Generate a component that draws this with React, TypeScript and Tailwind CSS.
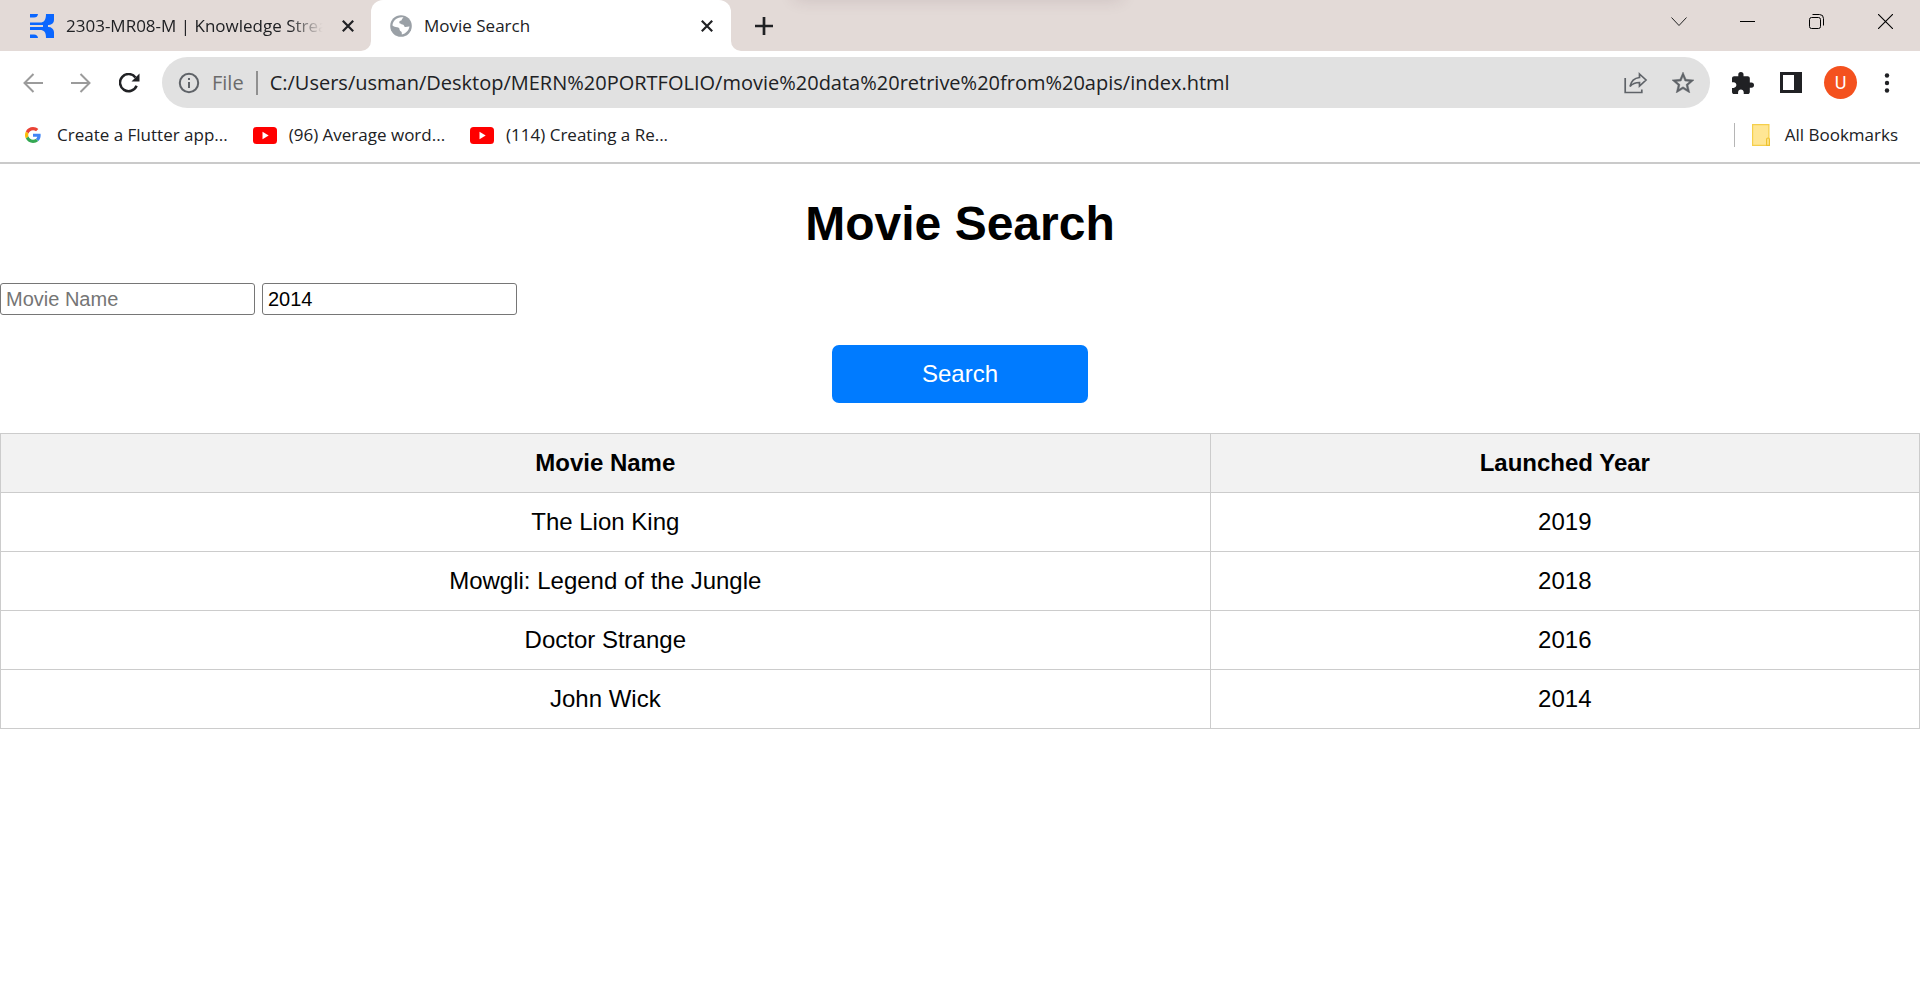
import React, { useState } from 'react';

const iconButton = 'flex h-[30px] w-[30px] shrink-0 items-center justify-center';
const uiFont = "font-['Open_Sans','Noto_Sans',sans-serif]";

function BrandIcon() {
  return (
    <svg width="24" height="24" viewBox="0 0 24 24" className="shrink-0" fill="#0a66ff" aria-hidden="true">
      <path d="M0 0h8a4 4 0 0 1-4 3.500H0z" />
      <path d="M16 0h8v6a5 5 0 0 1-5 5H0V8.500h10c4 0 6-2.500 6-8.500z" />
      <path d="M0 13h18.500a5.500 5.500 0 0 1 5.500 5V24h-8c0-6-2-8-6-8H0z" />
      <path d="M13 10.500h5v3h-5z" />
      <path d="M0 20.500h4A4 4 0 0 1 8 24H0z" />
    </svg>
  );
}

function GlobeIcon() {
  return (
    <svg width="22" height="22" viewBox="0 0 22 22" className="shrink-0" aria-hidden="true">
      <circle cx="11" cy="11" r="10.800" fill="#9aa0a6" />
      <path
        fill="#fff"
        d="M13.500 2.400c-.8.800-1.800 1.700-1.700 2.400.1.900-1.200.9-1.900 1.200-.9.400-.6 1.600-.3 2.200.3.500 1 .2 1.400.6.500.6 1.500.8 2.300 1 .9.300.7 1.900 1.600 2.200 1.400.4 2.900-.6 4.600-.4-.6 3.700-3.600 7.200-7.700 7.900v-1.700c0-1.100-1-1.600-1.700-2.100-.8-.6-.4-1.800-.9-2.400-1-1.200-3.200-1-4.500-1.500-.8-.3-1.500-1-2.200-1.300C2.600 6 7.400 1.300 13.500 2.400z"
      />
    </svg>
  );
}

function CloseIcon() {
  return (
    <svg width="12" height="12" viewBox="0 0 12 12" fill="none" stroke="#202124" strokeWidth="2.200" aria-hidden="true">
      <path d="M.8.8l10.400 10.400M11.200.8L.8 11.200" />
    </svg>
  );
}

function GoogleIcon() {
  return (
    <svg width="16" height="16" viewBox="0 0 48 48" className="shrink-0" aria-hidden="true">
      <path fill="#EA4335" d="M24 9.500c3.540 0 6.710 1.220 9.210 3.600l6.850-6.850C35.900 2.380 30.470 0 24 0 14.620 0 6.510 5.380 2.560 13.220l7.980 6.190C12.430 13.720 17.740 9.500 24 9.500z" />
      <path fill="#4285F4" d="M46.980 24.550c0-1.570-.15-3.090-.38-4.550H24v9.020h12.940c-.58 2.960-2.260 5.480-4.780 7.180l7.730 6c4.510-4.180 7.090-10.360 7.090-17.650z" />
      <path fill="#FBBC05" d="M10.530 28.590c-.48-1.450-.76-2.990-.76-4.590s.27-3.140.76-4.590l-7.980-6.190C.92 16.460 0 20.120 0 24c0 3.880.92 7.540 2.560 10.780l7.970-6.190z" />
      <path fill="#34A853" d="M24 48c6.480 0 11.930-2.130 15.890-5.810l-7.730-6c-2.150 1.450-4.920 2.300-8.160 2.300-6.260 0-11.570-4.220-13.470-9.910l-7.980 6.190C6.510 42.620 14.620 48 24 48z" />
    </svg>
  );
}

function VideoIcon() {
  return (
    <svg width="24" height="17" viewBox="0 0 24 17" className="shrink-0" aria-hidden="true">
      <rect width="24" height="17" rx="3.500" fill="#f00" />
      <path d="M9.500 4.800v7.400l6.200-3.700z" fill="#fff" />
    </svg>
  );
}

function TabStrip() {
  return (
    <div className="flex h-[51px] bg-white text-[17px]">
      <div className="flex w-[371px] shrink-0 items-center rounded-br-[10px] bg-[#e3dad7] pl-[30px] pr-[15px]">
        <BrandIcon />
        <span className="ml-3 whitespace-nowrap [mask-image:linear-gradient(to_right,black_85%,transparent_98%)]">
          2303-MR08-M | Knowledge Strea
        </span>
        <button aria-label="Close tab" className="ml-auto flex h-4 w-4 shrink-0 items-center justify-center">
          <CloseIcon />
        </button>
      </div>
      <div className="w-[360px] shrink-0 bg-[#e3dad7]">
        <div className="flex h-full items-center rounded-t-[12px] bg-white pl-[19px] pr-4">
          <GlobeIcon />
          <span className="ml-3">Movie Search</span>
          <button aria-label="Close tab" className="ml-auto flex h-4 w-4 items-center justify-center">
            <CloseIcon />
          </button>
        </div>
      </div>
      <div className="relative flex flex-1 justify-between overflow-hidden rounded-bl-[10px] bg-[#e3dad7]">
        <div className="absolute -top-4 left-[62px] h-4 w-[330px] rounded-lg shadow-[0_0_16px_rgba(80,50,60,0.15)]" />
        <button aria-label="New tab" className="ml-[18px] flex w-[30px] items-center justify-center">
          <svg width="18" height="18" viewBox="0 0 18 18" fill="none" stroke="#202124" strokeWidth="2.700" aria-hidden="true">
            <path d="M9 0v18M0 9h18" />
          </svg>
        </button>
        <div className="flex h-[43px]">
          <button aria-label="Search tabs" className="flex w-[69px] items-center justify-center">
            <svg width="16" height="16" viewBox="0 0 16 16" fill="none" stroke="#222" strokeWidth="1" aria-hidden="true">
              <path d="M.5 3.500l7.500 8 7.500-8" />
            </svg>
          </button>
          <button aria-label="Minimize" className="flex w-[69px] items-center justify-center">
            <svg width="15" height="15" viewBox="0 0 15 15" fill="#000" aria-hidden="true">
              <path d="M0 7h15v1H0z" />
            </svg>
          </button>
          <button aria-label="Restore" className="flex w-[69px] items-center justify-center">
            <svg width="15" height="15" viewBox="0 0 15 15" fill="none" stroke="#000" strokeWidth="1" aria-hidden="true">
              <rect x=".5" y="3.500" width="11" height="11" rx="2" />
              <path d="M3.500.5h7a4 4 0 0 1 4 4v7" />
            </svg>
          </button>
          <button aria-label="Close window" className="flex w-[69px] items-center justify-center">
            <svg width="15" height="15" viewBox="0 0 15 15" fill="none" stroke="#000" strokeWidth="1.100" aria-hidden="true">
              <path d="M0 0l15 15M15 0L0 15" />
            </svg>
          </button>
        </div>
      </div>
    </div>
  );
}

function Toolbar() {
  return (
    <div className="flex items-center gap-[18px] bg-white pl-[18px] pr-[21px] pt-1.5">
      <button aria-label="Back" className={iconButton}>
        <svg width="20" height="20" viewBox="0 0 20 20" fill="none" stroke="#9b9b9b" strokeWidth="2" aria-hidden="true">
          <path d="M20 10H2M10.500 1L1.500 10l9 9" />
        </svg>
      </button>
      <button aria-label="Forward" className={iconButton}>
        <svg width="20" height="20" viewBox="0 0 20 20" fill="none" stroke="#9b9b9b" strokeWidth="2" aria-hidden="true">
          <path d="M0 10h18M9.500 1l9 9-9 9" />
        </svg>
      </button>
      <button aria-label="Reload" className={iconButton}>
        <svg width="21" height="20" viewBox="0 0 21 20" fill="none" aria-hidden="true">
          <path d="M17.600 12.800A8.600 8.600 0 1 1 16.500 4.500" stroke="#202124" strokeWidth="2.500" />
          <path d="M20.500.5v8h-8z" fill="#202124" />
        </svg>
      </button>
      <div className="flex h-[51px] flex-1 items-center rounded-full bg-[#e1e1e1] pl-4 pr-4">
        <svg width="22" height="22" viewBox="0 0 22 22" fill="none" className="shrink-0" aria-hidden="true">
          <circle cx="11" cy="11" r="9.200" stroke="#5f6368" strokeWidth="2" />
          <path d="M10 10h2v6h-2zM10 6h2v2h-2z" fill="#5f6368" />
        </svg>
        <span className="ml-3 text-[20px] text-[#6b6b6b]">File</span>
        <span className="ml-3 h-6 w-0.5 bg-[#909090]" />
        <input
          aria-label="Address"
          className="ml-3 min-w-0 flex-1 bg-transparent text-[20px] text-[#202124] outline-none"
          defaultValue="C:/Users/usman/Desktop/MERN%20PORTFOLIO/movie%20data%20retrive%20from%20apis/index.html"
        />
        <button aria-label="Share" className="mr-6">
          <svg width="24" height="22" viewBox="0 0 24 22" fill="none" stroke="#5f6368" strokeWidth="1.700" aria-hidden="true">
            <path d="M1.200 6v14.500h16.600v-3" />
            <path d="M15.500 2l6.500 6-6.500 6v-3.500c-4 0-7 1-9.500 4C7 9.500 10 6 15.500 5.500z" />
          </svg>
        </button>
        <button aria-label="Bookmark this page">
          <svg width="22" height="21" viewBox="2 2 20 19" fill="#5f6368" stroke="#5f6368" strokeWidth=".4" aria-hidden="true">
            <path d="M22 9.240l-7.190-.62L12 2 9.190 8.630 2 9.240l5.460 4.730L5.820 21 12 17.270 18.180 21l-1.630-7.030L22 9.240zM12 15.400l-3.760 2.270 1-4.280-3.320-2.880 4.380-.38L12 6.100l1.710 4.040 4.380.38-3.320 2.880 1 4.280L12 15.400z" />
          </svg>
        </button>
      </div>
      <button aria-label="Extensions" className={iconButton}>
        <svg width="22" height="22" viewBox="2 1 21 21" fill="#202124" aria-hidden="true">
          <path d="M20.500 11H19V7c0-1.100-.9-2-2-2h-4V3.500a2.500 2.500 0 0 0-5 0V5H4c-1.100 0-1.990.9-1.990 2v3.800H3.500c1.490 0 2.700 1.210 2.700 2.700s-1.210 2.700-2.700 2.700H2V20c0 1.100.9 2 2 2h3.800v-1.500c0-1.490 1.210-2.700 2.700-2.700s2.700 1.210 2.700 2.700V22H17c1.100 0 2-.9 2-2v-4h1.500a2.500 2.500 0 0 0 0-5z" />
        </svg>
      </button>
      <button aria-label="Side panel" className={iconButton}>
        <svg width="22" height="21" viewBox="0 0 22 21" aria-hidden="true">
          <path fillRule="evenodd" fill="#202124" d="M0 0h22v21H0zM3 3v15h11V3z" />
        </svg>
      </button>
      <button aria-label="Profile" className="flex h-[33px] w-[33px] shrink-0 items-center justify-center rounded-full bg-[#f4511e] font-[Roboto,sans-serif] text-[18px] text-white">
        U
      </button>
      <button aria-label="Menu" className="flex h-[30px] w-6 shrink-0 items-center justify-center">
        <svg width="6" height="20" viewBox="0 0 6 20" fill="#202124" aria-hidden="true">
          <circle cx="3" cy="2.500" r="2.200" />
          <circle cx="3" cy="10" r="2.200" />
          <circle cx="3" cy="17.500" r="2.200" />
        </svg>
      </button>
    </div>
  );
}

function BookmarksBar() {
  return (
    <div className="flex h-[56px] items-center border-b-2 border-[#cacaca] bg-white pl-[25px] pr-[22px] text-[17px] whitespace-nowrap">
      <div className="flex items-center gap-[25px]">
        <a href="#flutter" className="flex items-center gap-4">
          <GoogleIcon />
          Create a Flutter app...
        </a>
        <a href="#average-word" className="flex items-center gap-3">
          <VideoIcon />
          (96) Average word...
        </a>
        <a href="#creating" className="flex items-center gap-3">
          <VideoIcon />
          (114) Creating a Re...
        </a>
      </div>
      <button className="ml-auto flex items-center">
        <span className="mr-[17px] h-6 w-px bg-[#b5b5b5]" />
        <svg width="18" height="22" viewBox="0 0 18 22" className="mr-[15px]" aria-hidden="true">
          <path d="M.6.600h16.300v20.800H.6z" fill="#ffe694" stroke="#f5cf4b" strokeWidth="1.200" />
          <path d="M14.600 21.400v-6q0-1.400 1.400-1.400t1.400 1.400v6z" fill="#ffe694" stroke="#eec22f" strokeWidth="1.200" />
        </svg>
        All Bookmarks
      </button>
    </div>
  );
}

const movies = [
  { name: 'The Lion King', year: 2019 },
  { name: 'Mowgli: Legend of the Jungle', year: 2018 },
  { name: 'Doctor Strange', year: 2016 },
  { name: 'John Wick', year: 2014 },
];

const field =
  'h-8 w-[255px] rounded-[3px] border border-[#767676] bg-white px-[5px] text-[20px] text-black placeholder:text-[#757575]';
const cell = 'border border-[#cccccc] px-[15px] py-[15px]';

function MovieSearch() {
  const [name, setName] = useState('');
  const [year, setYear] = useState('2014');
  return (
    <main className="font-['Liberation_Sans',Arial,sans-serif] text-[24px] leading-7 text-black">
      <h1 className="py-8 text-center text-[48px] leading-[55px] font-bold">Movie Search</h1>
      <form onSubmit={(e: React.FormEvent) => e.preventDefault()}>
        <div className="flex gap-[7px]">
          <input className={field} aria-label="Movie name" placeholder="Movie Name" value={name} onChange={(e) => setName(e.target.value)} />
          <input className={field} aria-label="Year" placeholder="Year" value={year} onChange={(e) => setYear(e.target.value)} />
        </div>
        <button className="mx-auto my-[30px] block h-[58px] w-64 rounded-[7px] bg-[#007bff] text-white">Search</button>
      </form>
      <table className="w-full border-collapse text-center">
        <thead className="bg-[#f2f2f2]">
          <tr>
            <th className={cell}>Movie Name</th>
            <th className={cell}>Launched Year</th>
          </tr>
        </thead>
        <tbody>
          {movies.map((m) => (
            <tr key={m.name}>
              <td className={cell}>{m.name}</td>
              <td className={cell}>{m.year}</td>
            </tr>
          ))}
        </tbody>
      </table>
    </main>
  );
}

export default function App() {
  return (
    <div className="min-h-screen bg-white">
      <header className={`${uiFont} text-[#202124]`}>
        <TabStrip />
        <Toolbar />
        <BookmarksBar />
      </header>
      <MovieSearch />
    </div>
  );
}
